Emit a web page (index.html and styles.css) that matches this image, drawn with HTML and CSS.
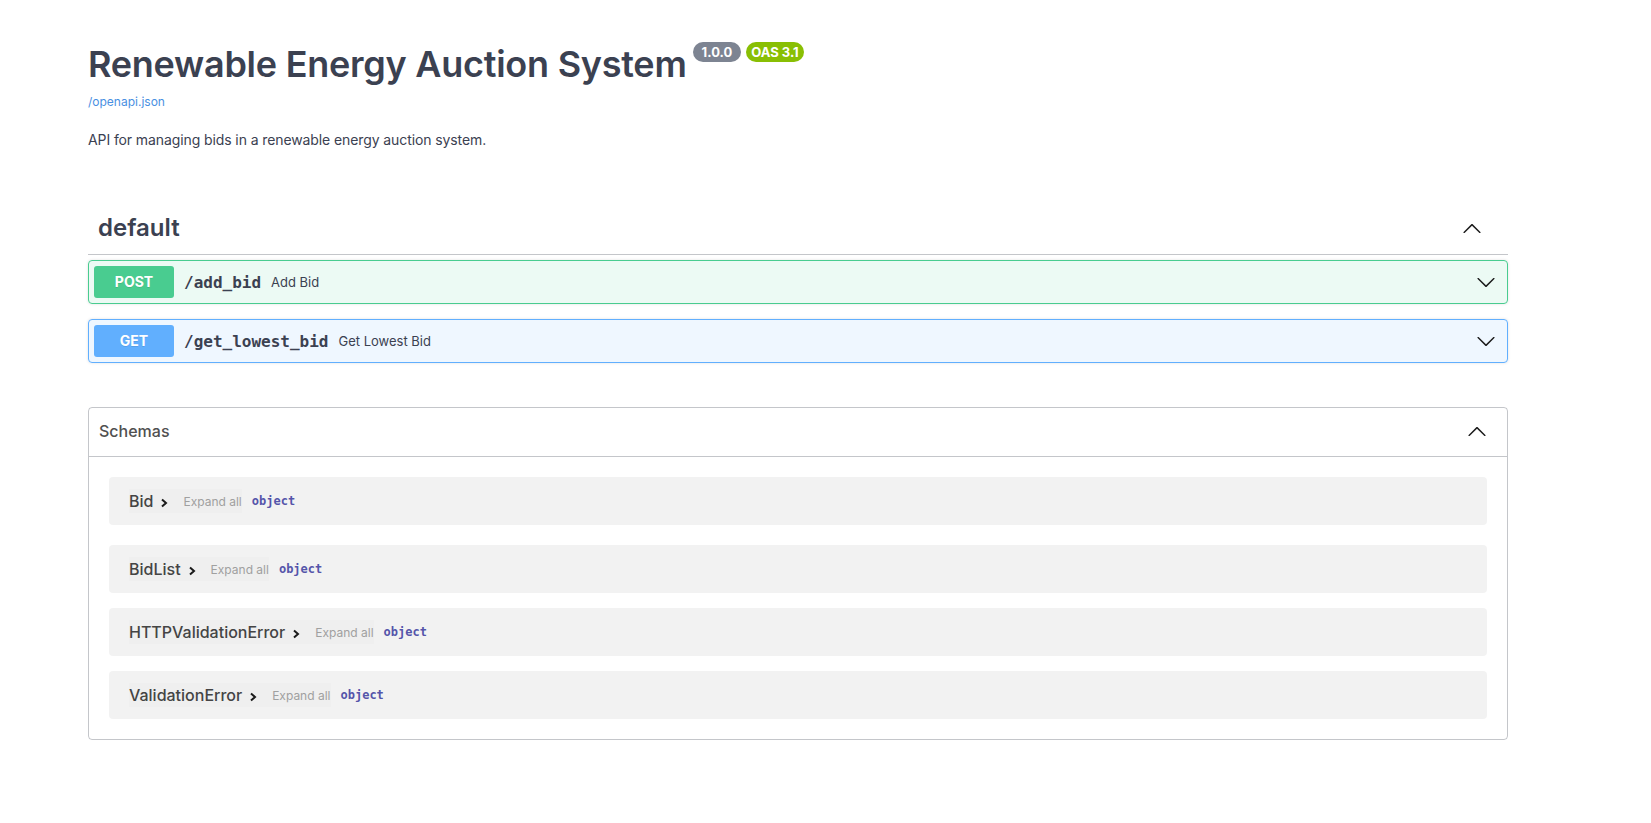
FILE: index.html
```html
<!DOCTYPE html>
<html lang="en">
<head>
<meta charset="utf-8">
<title>Renewable Energy Auction System</title>
<link rel="stylesheet" href="styles.css">
</head>
<body>
<div class="wrapper">
  <section class="info">
    <h2 class="title"><span class="title-text">Renewable Energy Auction System</span><span class="badge version">1.0.0</span><span class="badge oas">OAS 3.1</span></h2>
    <a class="url" href="#">/openapi.json</a>
    <p class="desc">API for managing bids in a renewable energy auction system.</p>
  </section>

  <section class="tag">
    <div class="tag-head">
      <h3 class="tag-name">default</h3>
      <svg class="arrow" width="20" height="20" viewBox="0 0 20 20"><path d="M17.418 14.908c.272.268.709.268.979 0s.271-.701 0-.969l-7.908-7.830c-.27-.268-.707-.268-.979 0l-7.908 7.830c-.27.268-.27.701 0 .969.271.268.709.268.979 0L10 7.767l7.418 7.141z"/></svg>
    </div>
    <div class="op post">
      <span class="method">POST</span>
      <span class="path">/add_bid</span>
      <span class="op-summary">Add Bid</span>
      <svg class="arrow op-arrow" width="20" height="20" viewBox="0 0 20 20"><path d="M17.418 6.109c.272-.268.709-.268.979 0s.271.701 0 .969l-7.908 7.830c-.27.268-.707.268-.979 0l-7.908-7.830c-.27-.268-.27-.701 0-.969.271-.268.709-.268.979 0L10 13.250l7.418-7.141z"/></svg>
    </div>
    <div class="op get">
      <span class="method">GET</span>
      <span class="path">/get_lowest_bid</span>
      <span class="op-summary">Get Lowest Bid</span>
      <svg class="arrow op-arrow" width="20" height="20" viewBox="0 0 20 20"><path d="M17.418 6.109c.272-.268.709-.268.979 0s.271.701 0 .969l-7.908 7.830c-.27.268-.707.268-.979 0l-7.908-7.830c-.27-.268-.27-.701 0-.969.271-.268.709-.268.979 0L10 13.250l7.418-7.141z"/></svg>
    </div>
  </section>

  <section class="models">
    <div class="models-head">
      <h4 class="models-title">Schemas</h4>
      <svg class="arrow" width="20" height="20" viewBox="0 0 20 20"><path d="M17.418 14.908c.272.268.709.268.979 0s.271-.701 0-.969l-7.908-7.830c-.27-.268-.707-.268-.979 0l-7.908 7.830c-.27.268-.27.701 0 .969.271.268.709.268.979 0L10 7.767l7.418 7.141z"/></svg>
    </div>
    <div class="models-body">
      <div class="model">
        <span class="model-ctrl"><span class="model-name">Bid</span><svg class="chev" width="8" height="10" viewBox="0 0 8 10"><polyline points="2,1.5 6,5 2,8.5"/></svg></span>
        <span class="expand">Expand all</span>
        <span class="type">object</span>
      </div>
      <div class="model">
        <span class="model-ctrl"><span class="model-name">BidList</span><svg class="chev" width="8" height="10" viewBox="0 0 8 10"><polyline points="2,1.5 6,5 2,8.5"/></svg></span>
        <span class="expand">Expand all</span>
        <span class="type">object</span>
      </div>
      <div class="model">
        <span class="model-ctrl"><span class="model-name">HTTPValidationError</span><svg class="chev" width="8" height="10" viewBox="0 0 8 10"><polyline points="2,1.5 6,5 2,8.5"/></svg></span>
        <span class="expand">Expand all</span>
        <span class="type">object</span>
      </div>
      <div class="model">
        <span class="model-ctrl"><span class="model-name">ValidationError</span><svg class="chev" width="8" height="10" viewBox="0 0 8 10"><polyline points="2,1.5 6,5 2,8.5"/></svg></span>
        <span class="expand">Expand all</span>
        <span class="type">object</span>
      </div>
    </div>
  </section>
</div>
</body>
</html>
```
FILE: styles.css
```css
* { box-sizing: border-box; }

body {
  margin: 0;
  background: #fff;
  font-family: Inter, "Noto Sans", "Liberation Sans", sans-serif;
  color: #3b4151;
}

.wrapper {
  width: 1420px;
  margin-left: 88px;
  padding-top: 42px;
  padding-bottom: 60px;
}

/* info */
.title {
  margin: 0;
  display: flex;
  align-items: flex-start;
  font-size: 36px;
  line-height: 44px;
  font-weight: 600;
  letter-spacing: -0.25px;
  color: #3b4151;
}
.title-text { margin-right: 6px; }
.badge {
  font-size: 13px;
  line-height: 16px;
  font-weight: 700;
  letter-spacing: 0;
  color: #fff;
  padding: 2px 6px;
  border-radius: 57px;
}
.version { background: #7d8492; padding: 2px 9px; margin-right: 5px; }
.oas { background: #89bf04; padding: 2px 5px; }

.url {
  display: block;
  margin-top: 8px;
  font-size: 12px;
  line-height: 16px;
  color: #4990e2;
  text-decoration: none;
}
.desc {
  margin: 20px 0 0;
  font-size: 14px;
  line-height: 20px;
  letter-spacing: -0.1px;
  color: #3b4151;
}

/* tag */
.tag { margin-top: 54px; }
.tag-head {
  display: flex;
  align-items: center;
  height: 51px;
  padding: 0 26px 3px 10px;
  border-bottom: 1px solid rgba(59, 65, 81, 0.3);
  margin-bottom: 5px;
}
.tag-name {
  margin: 0;
  flex: 1;
  font-size: 24px;
  line-height: 29px;
  font-weight: 600;
  color: #3b4151;
}
.arrow { fill: #1b1b1b; display: block; }

.op {
  display: flex;
  align-items: center;
  height: 44px;
  padding: 5px;
  border: 1px solid;
  border-radius: 4px;
  margin-bottom: 15px;
  box-shadow: 0 0 3px rgba(0, 0, 0, 0.12);
}
.op:last-child { margin-bottom: 0; }
.post { border-color: #49cc90; background: rgba(73, 204, 144, 0.1); }
.get { border-color: #61affe; background: rgba(97, 175, 254, 0.1); }
.method {
  width: 80px;
  height: 32px;
  line-height: 32px;
  text-align: center;
  border-radius: 3px;
  color: #fff;
  font-size: 14px;
  font-weight: 700;
  text-shadow: 0 1px 0 rgba(0, 0, 0, 0.1);
}
.post .method { background: #49cc90; }
.get .method { background: #61affe; }
.path {
  padding: 0 10px;
  font-family: "DejaVu Sans Mono", "Liberation Mono", monospace;
  font-size: 16px;
  font-weight: 700;
  color: #3b4151;
}
.op-summary {
  flex: 1;
  font-size: 13px;
  color: #3b4151;
}
.op-arrow { margin-right: 6px; }

/* models */
.models {
  margin-top: 44px;
  border: 1px solid rgba(59, 65, 81, 0.3);
  border-radius: 4px;
}
.models-head {
  display: flex;
  align-items: center;
  height: 49px;
  padding: 0 20px 2px 10px;
  border-bottom: 1px solid rgba(59, 65, 81, 0.3);
}
.models-title {
  margin: 0;
  flex: 1;
  font-size: 16px;
  font-weight: 500;
  color: #505050;
}
.models-body { padding: 20px; }

.model {
  display: flex;
  align-items: center;
  height: 48px;
  padding: 0 20px;
  background: rgba(0, 0, 0, 0.05);
  border-radius: 4px;
  margin-bottom: 15px;
}
.model:first-child { margin-bottom: 20px; }
.model:last-child { margin-bottom: 0; }

.model-ctrl {
  display: flex;
  align-items: center;
  height: 24px;
  padding-right: 9px;
  background: rgba(0, 0, 0, 0.012);
}
.model-name {
  font-size: 16px;
  font-weight: 500;
  color: #444;
  margin-right: 7px;
}
.chev {
  display: block;
  margin-top: 3px;
  fill: none;
  stroke: #1b1b1b;
  stroke-width: 2;
}
.expand {
  display: flex;
  align-items: center;
  height: 24px;
  padding: 0 0 0 6px;
  font-size: 12px;
  color: #a0a0a0;
  background: rgba(0, 0, 0, 0.012);
  margin-right: 10px;
}
.type {
  font-family: "DejaVu Sans Mono", "Liberation Mono", monospace;
  font-size: 12px;
  font-weight: 700;
  color: #55a;
}
```
